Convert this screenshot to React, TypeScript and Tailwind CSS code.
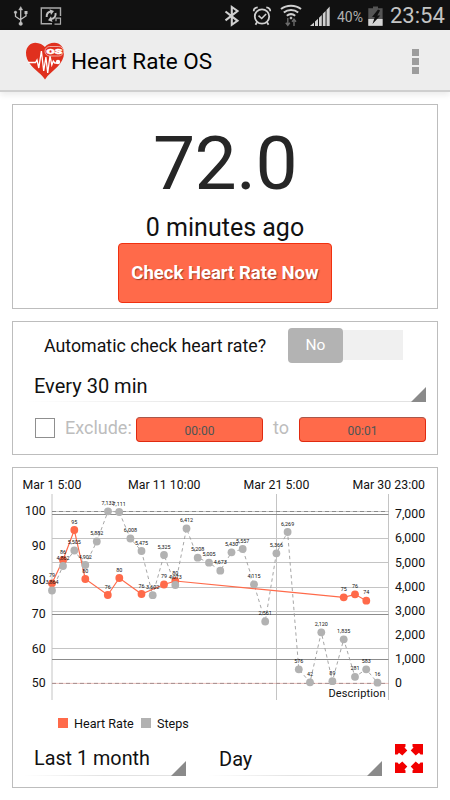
type Point = { x: number; y: number; label: string };

const steps: Point[] = [
  { x: 52, y: 590.5, label: "3,864" },
  { x: 63, y: 566, label: "4,862" },
  { x: 74.3, y: 550.5, label: "5,505" },
  { x: 85.3, y: 565, label: "4,902" },
  { x: 96.8, y: 541.5, label: "5,882" },
  { x: 108, y: 511.3, label: "7,132" },
  { x: 119.2, y: 512, label: "7,111" },
  { x: 130.4, y: 538.5, label: "6,008" },
  { x: 141.5, y: 551, label: "5,475" },
  { x: 152.7, y: 595.2, label: "3,602" },
  { x: 164, y: 555, label: "5,325" },
  { x: 175.3, y: 585, label: "4,073" },
  { x: 186.5, y: 528.5, label: "6,412" },
  { x: 197.7, y: 557.7, label: "5,208" },
  { x: 209, y: 562.7, label: "5,005" },
  { x: 220.3, y: 570.7, label: "4,673" },
  { x: 231.5, y: 552.3, label: "5,430" },
  { x: 242.7, y: 549, label: "5,557" },
  { x: 254, y: 584.3, label: "4,115" },
  { x: 265.2, y: 621.5, label: "2,561" },
  { x: 276.4, y: 553.3, label: "5,366" },
  { x: 287.6, y: 532, label: "6,269" },
  { x: 298.8, y: 669.3, label: "576" },
  { x: 310, y: 682.3, label: "42" },
  { x: 321.3, y: 632.3, label: "2,120" },
  { x: 332.4, y: 681.2, label: "89" },
  { x: 343.7, y: 639.3, label: "1,835" },
  { x: 355, y: 676.8, label: "281" },
  { x: 366.2, y: 669.3, label: "583" },
  { x: 377.5, y: 682.7, label: "16" },
];

const heartRate: Point[] = [
  { x: 52, y: 583.3, label: "79" },
  { x: 63, y: 560, label: "86" },
  { x: 74.3, y: 530, label: "95" },
  { x: 85.3, y: 579, label: "80" },
  { x: 107.8, y: 595, label: "76" },
  { x: 119.3, y: 578, label: "80" },
  { x: 141.5, y: 594, label: "76" },
  { x: 164, y: 584.5, label: "79" },
  { x: 175.3, y: 581, label: "80" },
  { x: 343.7, y: 597.3, label: "75" },
  { x: 355, y: 594.3, label: "76" },
  { x: 366.3, y: 600.7, label: "74" },
];

const lightGrid = [538.5, 562.5, 587.5, 611.5, 648.5];
const darkGrid = [514.5, 614.5, 659.5];

const toLine = (points: Point[]) =>
  points.map((p) => `${p.x},${p.y}`).join(" ");

const Series = ({ points, color }: { points: Point[]; color: string }) => (
  <g>
    {points.map((p) => (
      <g key={p.x}>
        <circle cx={p.x} cy={p.y} r="3.9" fill={color} />
        <text x={p.x} y={p.y - 6.4} fontSize="5.4" textAnchor="middle" fill="#111">
          {p.label}
        </text>
      </g>
    ))}
  </g>
);

const Chart = () => (
  <svg viewBox="13 468 424 240" className="block h-[240px] w-[424px]">
    <g fontSize="12.3" fill="#111">
      <text x="22.5" y="489" textLength="59">Mar 1 5:00</text>
      <text x="128" y="489" textLength="72.5">Mar 11 10:00</text>
      <text x="243.5" y="489" textLength="66">Mar 21 5:00</text>
      <text x="352.5" y="489" textLength="72.5">Mar 30 23:00</text>
    </g>
    <g stroke="#c4c4c4" strokeWidth="1">
      {[52, 276.5, 388.5].map((x) => (
        <line key={x} x1={x} x2={x} y1="494" y2="700" />
      ))}
      {lightGrid.map((y) => (
        <line key={y} x1="52" x2="388.5" y1={y} y2={y} />
      ))}
    </g>
    <g stroke="#8c8c8c" strokeWidth="1">
      {darkGrid.map((y) => (
        <line key={y} x1="52" x2="388.5" y1={y} y2={y} />
      ))}
    </g>
    <line x1="52" x2="388.5" y1="511.5" y2="511.5" stroke="#c8c8c8" />
    <line x1="52" x2="388.5" y1="511.5" y2="511.5" stroke="#8a8a8a" strokeDasharray="4 3" />
    <line x1="52" x2="388.5" y1="683.4" y2="683.4" stroke="#ecc2be" />
    <line x1="52" x2="388.5" y1="683.4" y2="683.4" stroke="#a58f8f" strokeDasharray="4 3" />
    <g fontSize="12.3" fill="#111" textAnchor="end">
      {[100, 90, 80, 70, 60, 50].map((v, i) => (
        <text key={v} x="45.7" y={515.3 + i * 34.35}>
          {v}
        </text>
      ))}
    </g>
    <g fontSize="12.3" fill="#111">
      {["7,000", "6,000", "5,000", "4,000", "3,000", "2,000", "1,000", "0"].map((v, i) => (
        <text key={v} x="395" y={518.2 + i * 24.15}>
          {v}
        </text>
      ))}
    </g>
    <polyline points={toLine(steps)} fill="none" stroke="#9c9c9c" strokeWidth="0.9" strokeDasharray="3.4 3" />
    <polyline points={toLine(heartRate)} fill="none" stroke="#ff6a4a" strokeWidth="1.2" />
    <Series points={heartRate} color="#ff6a4a" />
    <Series points={steps} color="#b2b2b2" />
    <text x="328.5" y="697.3" fontSize="11" textLength="57" fill="#111">
      Description
    </text>
  </svg>
);

const StatusBar = () => (
  <div className="flex h-[30px] items-center bg-[#111] text-[#c4c4c4]">
    <svg viewBox="0 0 450 30" className="absolute h-[30px] w-[450px]" fill="none" stroke="#c0c0c0">
      {/* usb */}
      <g strokeWidth="1.3">
        <path d="M20.7 9v14M15.5 13v3.5l5.2 3.5M26 13v3l-5.3 3.5" />
        <path d="M20.7 6.5l2 3.5h-4z" fill="#c0c0c0" strokeWidth="0.4" />
        <circle cx="15.5" cy="12.3" r="1.3" fill="#c0c0c0" strokeWidth="0.4" />
        <path d="M24.5 11h3v3h-3z" fill="#c0c0c0" strokeWidth="0" />
        <circle cx="20.7" cy="23.7" r="1.8" fill="#c0c0c0" strokeWidth="0.4" />
      </g>
      {/* screen mirroring */}
      <g strokeWidth="1.4">
        <path d="M52 23.8H41.300V8h19.200v8" stroke="#aaa" />
        <path d="M54.500 24.200h6v-6h-4.500v3" stroke="#aaa" strokeWidth="1.2" />
        <path d="M46.700 17c-.2-3 1.300-5 4-5.200M55.500 13c.6 3-1.100 5.800-4.300 6" strokeWidth="2" />
        <path d="M49.500 9.300l4.500 1.700-3 4zM52.500 22l-4.500-1.700 3-4z" fill="#c0c0c0" strokeWidth="0" />
      </g>
      {/* bluetooth */}
      <path d="M225.5 11.5l12 9.3-5.7 4V7l5.700 4-12 9.300" stroke="#d0d0d0" strokeWidth="2.1" />
      {/* alarm */}
      <g stroke="#d0d0d0">
        <circle cx="262" cy="16.5" r="7.2" strokeWidth="1.8" />
        <path d="M258.5 15.7l3.2 2.8 4.4-4.5" strokeWidth="1.6" />
        <path d="M253.7 11.2c0-2 1.7-3.7 4-3.9M266.3 7.3c2.3.2 4 1.9 4 3.9" strokeWidth="1.7" />
        <path d="M257 22.3l-1.5 2.5M267 22.3l1.5 2.5" strokeWidth="1.8" />
      </g>
      {/* wifi */}
      <g stroke="#d0d0d0" strokeWidth="2">
        <path d="M281 9c5.5-4.4 14.5-4.4 20 0M283.8 12.5c4-3.2 10.4-3.2 14.4 0M286.8 15.8c2.5-2 5.9-2 8.4 0" />
        <circle cx="291" cy="18" r="1" fill="#d0d0d0" strokeWidth="0.7" />
        <path d="M287.8 18v7M285.8 22.8l2 2.5 2-2.5M294 26v-6M292 21.7l2-2.5 2 2.5" stroke="#6b6b6b" strokeWidth="1.4" />
      </g>
      {/* signal */}
      <g fill="#d0d0d0" stroke="none">
        <path d="M310 26l4-3.500v3.500z" />
        <path d="M315 26v-4.500l3-2.800V26z" />
        <path d="M319 26v-8.300l2.800-2.800V26z" />
        <path d="M322.800 26V13.800l2.800-2.800V26z" />
        <path d="M326.500 26V10l3.200-3.500V26z" />
      </g>
      {/* battery */}
      <g stroke="none">
        <path d="M373 6.4h5v1.8h4.6v17.6h-14.3V8.2h4.7z" fill="#555" />
        <path d="M368.3 19h14.3v6.8h-14.3z" fill="#d6d6d6" />
        <path d="M378 9.500l-6 7.500h2.800l-2.300 7 7.800-8.500h-3l2.800-5z" fill="#111" />
      </g>
    </svg>
    <span className="ml-[337px] mt-[3px] w-[28px] whitespace-nowrap text-[14px] leading-none text-[#b0b0b0]">40%</span>
    <span className="ml-[25px] mt-px text-[22px] leading-none">23:54</span>
  </div>
);

const HeartLogo = () => (
  <svg viewBox="0 0 40 38" className="mt-px h-[38px] w-10">
    <path
      d="M20 37.500C17 32.500 11 29 6.200 23.500C2.500 19.300.8 14.500 1 10.500C1.300 5 5.400.8 10.400.8C14.500.8 18 3 19.900 5C21.800 2.500 25.300.8 29.400.8C35 .8 39 5.500 39 11C39 16 36.500 20.500 33 24.300C28 29.500 23 32.500 20 37.500Z"
      fill="#e0301e"
    />
    <path
      d="M3 20.500h7.500l1.500-2.500 1.800 8 2.600-17 2.300 20 2.200-14 1.800 16 2.300-17 1.800 9 1.500-4 1.500 2h3"
      fill="none"
      stroke="#fff"
      strokeWidth="1.300"
    />
    <circle cx="33" cy="20" r="2.200" fill="#fff" />
    <rect x="20" y="4.500" width="18.500" height="9.500" rx="4.700" fill="#e0301e" stroke="#f5c7c0" strokeWidth="0.800" />
    <text x="21.500" y="11.800" fontSize="7" fontWeight="900" fill="#fff" stroke="#fff" strokeWidth="0.500" textLength="15.500" lengthAdjust="spacingAndGlyphs">
      OS
    </text>
  </svg>
);

const Header = () => (
  <header className="flex h-[62px] items-center border-b-2 border-[#cfcfcf] bg-[#ededed] pl-[25px] shadow-[0_3px_6px_rgba(0,0,0,0.08)]">
    <HeartLogo />
    <h1 className="mt-1 ml-1.5 flex-1 text-[22.500px] text-black">Heart Rate OS</h1>
    <div className="mt-[3px] mr-[31px] flex flex-col gap-[2px]">
      <span className="h-[7px] w-[7px] bg-[#9c9c9c]" />
      <span className="h-[7px] w-[7px] bg-[#9c9c9c]" />
      <span className="h-[7px] w-[7px] bg-[#9c9c9c]" />
    </div>
  </header>
);

const Spinner = ({ label, className }: { label: string; className: string }) => (
  <div className={`relative flex items-center leading-none ${className}`}>
    {label}
    <span className="absolute inset-x-0 bottom-0 h-px bg-linear-to-r from-white via-[#e2e2e2] to-[#e2e2e2]" />
    <svg viewBox="0 0 15 15" className="absolute right-0 bottom-0 h-[15px] w-[15px]">
      <path d="M15 0v15H0z" fill="#8a8a8a" />
    </svg>
  </div>
);

const TimeButton = ({ label }: { label: string }) => (
  <button className="flex h-[25px] w-[127px] items-center justify-center rounded-[4px] border border-[#e02a10] border-t-[#a8574b] bg-[#ff6a4a] pt-0.5 text-[12px] text-[#4d5555]">
    {label}
  </button>
);

const ExpandIcon = () => (
  <svg viewBox="0 0 28 29" className="h-[29px] w-7" fill="#f20000">
    <path id="arrow" d="M0 0h10.500v2.500l-1 1L12.300 6.500 7.300 11.500 4 8.700 2.500 10.500H0z" />
    <use href="#arrow" transform="translate(28 0) scale(-1 1)" />
    <use href="#arrow" transform="translate(0 29) scale(1 -1)" />
    <use href="#arrow" transform="translate(28 29) scale(-1 -1)" />
  </svg>
);

export default function App() {
  return (
    <div className="h-[800px] w-[450px] overflow-hidden bg-white font-[Roboto,sans-serif] text-[#111]">
      <StatusBar />
      <Header />
      <main className="flex flex-col gap-3 px-3 pt-3">
        <section className="flex h-[205px] w-[426px] flex-col items-center border border-[#bdbdbd]">
          <p className="mt-5 h-[85px] text-[75px] leading-[76px] tracking-[-0.500px] text-[#262626]">72.0</p>
          <p className="h-[33px] text-[25px] leading-[35px]">0 minutes ago</p>
          <button className="h-[60px] w-[214px] rounded-[4px] border border-[#f03010] bg-[#ff6a4a] pt-0.5 text-[18.500px] font-bold text-white [text-shadow:1px_1px_1px_rgba(90,30,20,0.6)]">
            Check Heart Rate Now
          </button>
        </section>

        <section className="flex h-[134px] w-[426px] flex-col border border-[#bdbdbd]">
          <div className="flex h-[46px] items-center pl-[31px]">
            <span className="mt-0.5 w-[244px] text-[17.800px]">Automatic check heart rate?</span>
            <div className="flex h-[35px] items-center">
              <span className="flex h-[35px] w-[55px] items-center justify-center rounded-[4px] bg-[#b3b3b3] pt-0.5 text-[15.500px] text-white">No</span>
              <span className="h-[30px] w-[60px] bg-[#f0f0f0]" />
            </div>
          </div>
          <Spinner label="Every 30 min" className="ml-[11px] h-[34px] w-[402px] pl-2.5 pt-px text-[20px]" />
          <div className="mt-[15px] flex h-[25px] items-center pl-[22px] text-[18px] text-[#bdbdbd]">
            <span className="-mt-1 h-5 w-5 border border-[#8f8f8f]" />
            <span className="-mt-1 ml-2.5 w-[71px]">Exclude:</span>
            <TimeButton label="00:00" />
            <span className="-mt-1 w-9 text-center">to</span>
            <TimeButton label="00:01" />
          </div>
        </section>

        <section className="h-[321px] w-[426px] border border-[#bdbdbd]">
          <Chart />
          <div className="mt-[9px] flex h-3 items-center pl-[45px] text-[12.600px]">
            <span className="h-2.5 w-2.5 bg-[#ff6a4a]" />
            <span className="mt-0.5 ml-1.5 w-[67px]">Heart Rate</span>
            <span className="h-2.5 w-2.5 bg-[#b2b2b2]" />
            <span className="mt-0.5 ml-1.5">Steps</span>
          </div>
          <div className="mt-[13px] flex h-[34px]">
            <Spinner label="Last 1 month" className="ml-[11px] h-[34px] w-[162px] pl-2.5 text-[19.800px]" />
            <Spinner label="Day" className="ml-[22px] h-[34px] w-[174px] pl-[11px] text-[20px]" />
            <div className="mt-[2px] ml-[13px]">
              <ExpandIcon />
            </div>
          </div>
        </section>
      </main>
    </div>
  );
}
